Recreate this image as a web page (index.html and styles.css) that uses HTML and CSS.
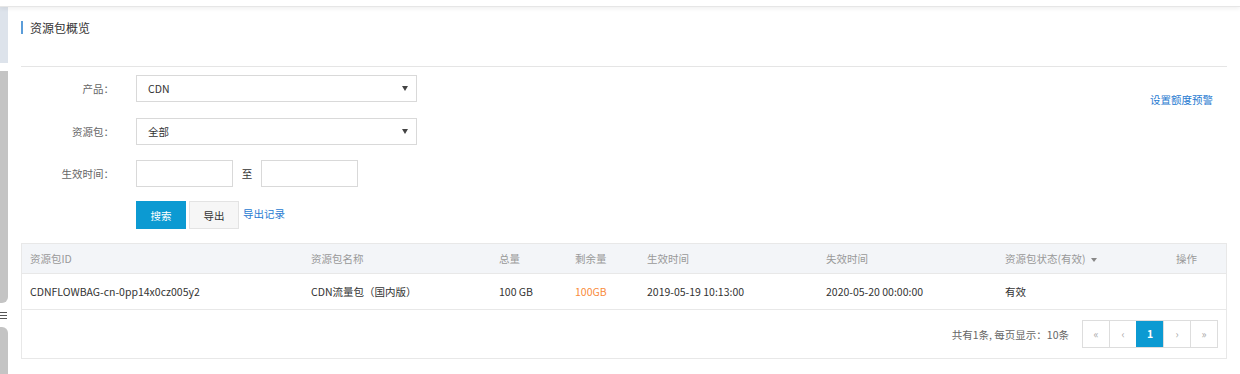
FILE: index.html
```html
<!DOCTYPE html>
<html lang="zh-CN">
<head>
    <meta charset="UTF-8">
    <meta name="viewport" content="width=device-width, initial-scale=1.0">
    <title>资源包概览</title>
    <link rel="stylesheet" href="styles.css">
</head>
<body>

    <div class="topbar"></div>

    <div class="layout">
        <aside class="side-strip">
            <div class="strip-top"></div>
            <div class="strip-mid"></div>
            <div class="strip-icon"><i></i><i></i><i></i></div>
            <div class="strip-bottom"></div>
        </aside>

        <main class="content">
            <div class="page-title"><span>资源包概览</span></div>

            <div class="filter">
                <div class="filter-form">
                    <div class="form-row row-product">
                        <label class="form-label">产品：</label>
                        <div class="select"><span>CDN</span><i class="caret"></i></div>
                    </div>
                    <div class="form-row">
                        <label class="form-label">资源包：</label>
                        <div class="select"><span>全部</span><i class="caret"></i></div>
                    </div>
                    <div class="form-row row-date">
                        <label class="form-label">生效时间：</label>
                        <input type="text" class="date-input">
                        <span class="range-sep">至</span>
                        <input type="text" class="date-input">
                    </div>
                    <div class="form-row buttons">
                        <span class="form-label"></span>
                        <button class="btn btn-primary">搜索</button>
                        <button class="btn">导出</button>
                        <a class="link export-log">导出记录</a>
                    </div>
                </div>
                <a class="link quota-link">设置额度预警</a>
            </div>

            <div class="table-box">
                <table class="data-table">
                    <colgroup>
                        <col class="c-id"><col class="c-name"><col class="c-total"><col class="c-left">
                        <col class="c-start"><col class="c-end"><col class="c-status"><col class="c-op">
                    </colgroup>
                    <thead>
                        <tr>
                            <th>资源包ID</th>
                            <th>资源包名称</th>
                            <th>总量</th>
                            <th>剩余量</th>
                            <th>生效时间</th>
                            <th>失效时间</th>
                            <th>资源包状态(有效) <i class="caret caret-sm"></i></th>
                            <th>操作</th>
                        </tr>
                    </thead>
                    <tbody>
                        <tr>
                            <td>CDNFLOWBAG-cn-0pp14x0cz005y2</td>
                            <td>CDN流量包（国内版）</td>
                            <td>100 GB</td>
                            <td class="remain">100GB</td>
                            <td>2019-05-19 10:13:00</td>
                            <td>2020-05-20 00:00:00</td>
                            <td>有效</td>
                            <td></td>
                        </tr>
                    </tbody>
                </table>
                <div class="table-footer">
                    <span class="page-info">共有1条, 每页显示：10条</span>
                    <ul class="pager">
                        <li>«</li>
                        <li>‹</li>
                        <li class="active">1</li>
                        <li>›</li>
                        <li>»</li>
                    </ul>
                </div>
            </div>
        </main>
    </div>

</body>
</html>
```

FILE: styles.css
```css
body {
    margin: 0;
    font-family: "Noto Sans CJK SC", sans-serif;
    font-size: 10.5px;
    color: #333;
    background: #fff;
}
.topbar {
    height: 6px;
    background: #fff;
    border-bottom: 1px solid #e6e6e6;
    box-shadow: 0 2px 4px rgba(0, 0, 0, 0.06);
    position: relative;
    z-index: 1;
}
.layout {
    display: flex;
}

/* left collapsed sidebar */
.side-strip {
    width: 8px;
    display: flex;
    flex-direction: column;
    height: 367px;
}
.strip-top {
    height: 56px;
    background: #dde3eb;
}
.strip-mid {
    margin-top: 8px;
    height: 232px;
    background: #c4c4c4;
    border-bottom-right-radius: 6px;
}
.strip-icon {
    height: 24px;
    display: flex;
    flex-direction: column;
    justify-content: center;
    gap: 2px;
}
.strip-icon i {
    display: block;
    height: 1px;
    width: 7px;
    background: #555;
}
.strip-bottom {
    flex: 1;
    background: #c4c4c4;
    border-top-right-radius: 6px;
}

.content {
    flex: 1;
    padding: 0 13px 0 13px;
}
.page-title {
    height: 60px;
    border-bottom: 1px solid #e5e5e5;
    box-sizing: border-box;
    padding-top: 14px;
}
.page-title span {
    display: inline-block;
    border-left: 2px solid #5b9dd9;
    padding-left: 7px;
    line-height: 13px;
    font-size: 12px;
    color: #333;
}

.filter {
    display: flex;
    justify-content: space-between;
    align-items: flex-start;
    padding-top: 8px;
}
.form-row {
    display: flex;
    align-items: center;
    margin-bottom: 15px;
}
.row-product {
    margin-bottom: 16px;
}
.form-label {
    width: 93px;
    text-align: right;
    color: #666;
    margin-right: 22px;
}
.select {
    width: 281px;
    height: 27px;
    box-sizing: border-box;
    border: 1px solid #d9d9d9;
    display: flex;
    align-items: center;
    justify-content: space-between;
    padding: 0 8px 0 11px;
    color: #333;
}
.caret {
    display: inline-block;
    width: 0;
    height: 0;
    border-left: 3px solid transparent;
    border-right: 3px solid transparent;
    border-top: 5px solid #444;
}
.caret-sm {
    border-top-color: #888;
    border-top-width: 4px;
    vertical-align: middle;
    margin-left: 3px;
}
.date-input {
    width: 97px;
    height: 27px;
    box-sizing: border-box;
    border: 1px solid #d9d9d9;
    margin: 0;
    padding: 0 6px;
    font: inherit;
}
.range-sep {
    width: 28px;
    text-align: center;
    color: #333;
}
.row-date {
    margin-bottom: 14px;
}
.buttons {
    margin-bottom: 14px;
}
.btn {
    width: 50px;
    height: 28px;
    border: 1px solid #e3e3e3;
    background: #f6f6f6;
    color: #333;
    font: inherit;
    padding: 0;
    margin-right: 3px;
}
.btn-primary {
    background: #0c9ad2;
    border-color: #0c9ad2;
    color: #fff;
}
.link {
    color: #1f7ad1;
    text-decoration: none;
}
.export-log {
    margin-left: 1px;
    margin-top: -3px;
}
.quota-link {
    margin-top: 17px;
    margin-right: 14px;
}

.table-box {
    border: 1px solid #e8e8e8;
}
.data-table {
    width: 100%;
    border-collapse: collapse;
    table-layout: fixed;
}
.c-id { width: 281px; }
.c-name { width: 188px; }
.c-total { width: 76px; }
.c-left { width: 72px; }
.c-start { width: 179px; }
.c-end { width: 179px; }
.c-status { width: 171px; }
.data-table th {
    background: #f3f5f8;
    color: #999;
    font-weight: normal;
    text-align: left;
    height: 29px;
    padding: 0 8px;
}
.data-table td {
    height: 35px;
    padding: 0 8px;
    border-top: 1px solid #e8e8e8;
    border-bottom: 1px solid #e8e8e8;
    white-space: nowrap;
}
.remain {
    color: #f98b3c;
}
.table-footer {
    display: flex;
    justify-content: flex-end;
    align-items: center;
    padding: 10px 8px 10px 0;
}
.page-info {
    color: #666;
    margin-right: 13px;
}
.pager {
    display: flex;
    list-style: none;
    margin: 0;
    padding: 0;
    border: 1px solid #ddd;
}
.pager li {
    width: 26px;
    height: 26px;
    line-height: 26px;
    text-align: center;
    color: #aaa;
    border-left: 1px solid #ddd;
}
.pager li:first-child {
    border-left: none;
}
.pager li.active {
    background: #0c9ad2;
    color: #fff;
    font-weight: bold;
    border-left-color: #0c9ad2;
}
```
